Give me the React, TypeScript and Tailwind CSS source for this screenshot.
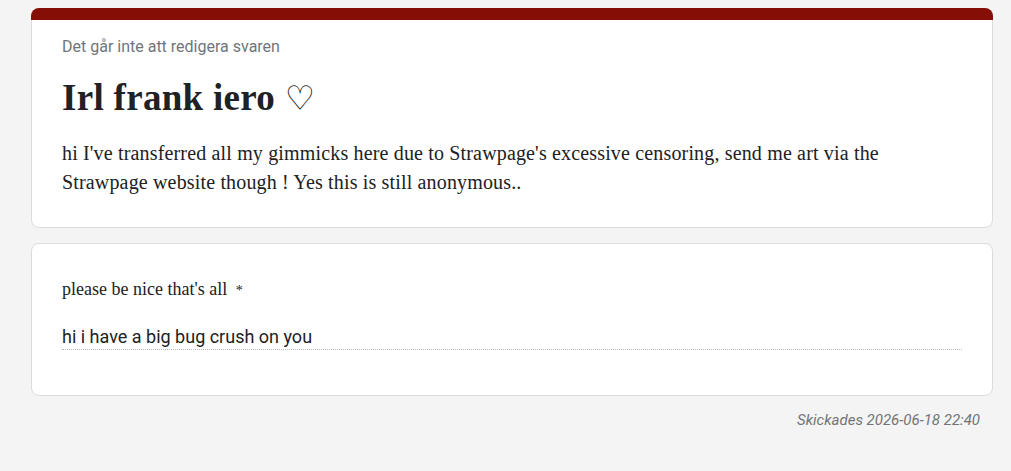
import React from 'react';

const serif = { fontFamily: '"Liberation Serif", "DejaVu Serif", serif' };

const App: React.FC = () => {
    return (
        <div className="min-h-[471px] w-full bg-[#f4f4f4] pt-2 font-['Roboto',sans-serif]">
            <div className="ml-[31px] w-[962px]">
                <div className="h-[12px] rounded-t-lg bg-[#850f06]" />
                <div className="rounded-b-lg border border-t-0 border-[#dadce0] bg-white px-[30px] pt-[17px] pb-[30px]">
                    <div className="text-[16px] leading-5 text-[#70757a]">Det går inte att redigera svaren</div>
                    <h1
                        className="mt-[19px] text-[37px] font-bold leading-[44px] tracking-[0.3px] text-[#202124]"
                        style={serif}
                    >
                        Irl frank iero <span className="font-normal text-[34px]">♡</span>
                    </h1>
                    <p
                        className="mt-[18px] text-[20px] leading-[29px] tracking-[0.16px] text-[#202124]"
                        style={serif}
                    >
                        hi I've transferred all my gimmicks here due to Strawpage's excessive censoring, send me art via the
                        <br />
                        Strawpage website though ! Yes this is still anonymous..
                    </p>
                </div>

                <div className="mt-[15px] rounded-lg border border-[#dadce0] bg-white px-[30px] pt-[33px] pb-[45px]">
                    <div className="text-[18px] leading-6 text-[#202124]" style={serif}>
                        please be nice that's all <span className="ml-1 text-[14px] text-[#202124]">*</span>
                    </div>
                    <div className="mt-[22px] border-b border-dotted border-[#bdbdbd] text-[18px] leading-6 text-[#202124]">
                        hi i have a big bug crush on you
                    </div>
                </div>

                <div className="mt-[14px] pr-[13px] text-right text-[15px] italic leading-5 text-[#70757a]">
                    Skickades 2026-06-18 22:40
                </div>
            </div>
        </div>
    );
};

export default App;
